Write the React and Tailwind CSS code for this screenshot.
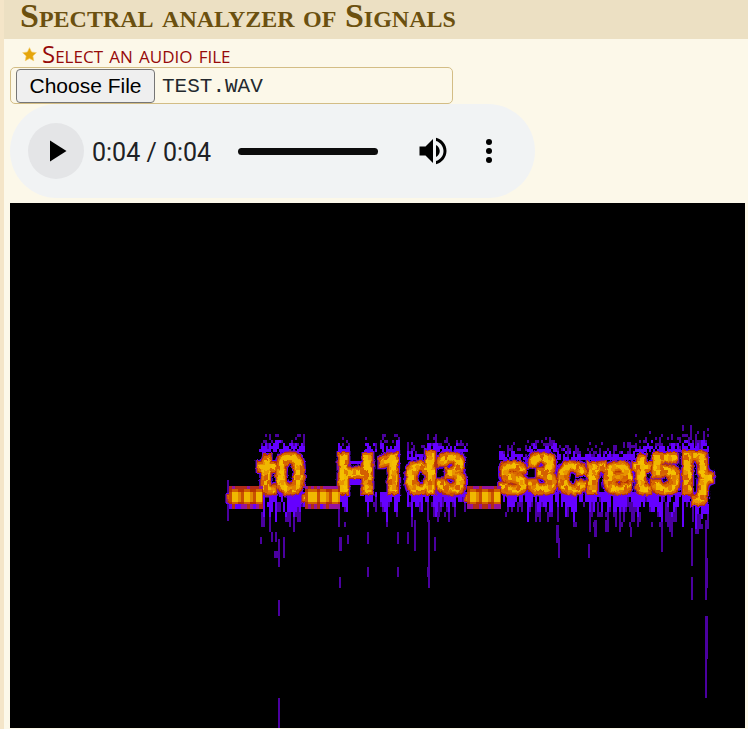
import React from "react";

const GLYPH_X = [229, 258, 275, 304, 336, 376, 405, 436, 467, 498, 527, 557, 585, 603, 633, 650, 680, 692];

// Deterministic noise so that every render gives the same spectrum.
function noise(a, b) {
  const v = Math.sin(a * 127.1 + b * 311.7) * 43758.5453;
  return v - Math.floor(v);
}

// [start, end, first bin, last bin, reach up, reach down]
const BANDS = [
  [259, 305, 452, 492, 18, 42],
  [338, 349, 452, 492, 15, 46],
  [349, 364, 464, 480, 2, 1],
  [365, 376, 452, 492, 15, 40],
  [380, 400, 452, 492, 20, 46],
  [407, 427, 460, 492, 16, 46],
  [427, 438, 452, 492, 20, 54],
  [438, 467, 452, 492, 13, 38],
  [499, 527, 460, 492, 16, 40],
  [527, 557, 452, 492, 15, 48],
  [557, 635, 460, 492, 17, 48],
  [635, 681, 452, 492, 19, 46],
  [682, 693, 452, 492, 24, 54],
  [695, 708, 452, 504, 22, 36],
];

const STREAKS = [
  [278, 539, 2, 28], [274, 551, 5, 7], [260, 537, 2, 7], [283, 537, 2, 21],
  [278, 600, 2, 16], [278, 698, 2, 30],
  [339, 577, 2, 11], [339, 537, 3, 14], [347, 535, 2, 9], [367, 567, 2, 10],
  [367, 532, 2, 12], [397, 567, 2, 10], [397, 532, 2, 12], [407, 532, 2, 12],
  [414, 520, 2, 31], [428, 520, 2, 68], [427, 567, 3, 10], [434, 537, 2, 14],
  [556, 525, 3, 18], [558, 538, 2, 20], [588, 544, 2, 14],
  [594, 520, 3, 17], [605, 520, 4, 12], [630, 527, 2, 10],
  [691, 528, 2, 38], [691, 577, 2, 23], [705, 520, 2, 80],
  [706, 558, 2, 30], [705, 616, 3, 43], [705, 659, 2, 39],
];

function spikes() {
  const out = [];
  BANDS.forEach(([from, to, top, bottom, up, down]) => {
    for (let x = from; x < to; x += 2) {
      const bright = up * (0.1 + 0.45 * noise(x, 1));
      const rise = up * (0.35 + 0.75 * noise(x, 2));
      for (let d = 0; d < rise; d += 3) {
        if (noise(x, d + 20) < (d < bright ? 0.85 : 0.5)) {
          out.push([x, top - d - 3, 2, 3, d < bright ? "#6500ff" : "#4b00a0"]);
        }
      }
      const group = noise(Math.floor(x / 4), 9);
      const lit = down * (0.05 + 0.5 * noise(x, 3) * (0.4 + group));
      const fall = lit + down * 0.8 * group * noise(x, 4);
      for (let d = 0; d < fall; d += 5) {
        if (noise(x, Math.floor(d / 10) + 70) < (d < lit ? 0.88 : 0.75)) {
          out.push([x, bottom + d, 2, 5, d < lit ? "#6500ff" : "#4b00a0"]);
        }
      }
    }
  });
  return out;
}

const HEAT = ["#e08000", "#f0b800", "#f0b800", "#e89400", "#f4c000", "#d46000"];

function Grain() {
  const cells = [];
  for (let y = 0; y < 60; y += 5) {
    for (let x = 0; x < 60; x += 4) {
      const c = HEAT[Math.floor(noise(x + 5, y + 3) * HEAT.length)];
      cells.push(<rect key={x + "-" + y} x={x} y={y} width="4" height="5" fill={c} />);
    }
  }
  return <>{cells}</>;
}

function Floor({ x, width }) {
  const cells = [];
  for (let i = 0; i < width; i += 3) {
    const w = Math.min(3, width - i);
    const n = noise(x + i, 5);
    const core = Math.sin((i / width) * Math.PI * 3) ** 2;
    cells.push(
      <g key={i}>
        <rect x={x + i} y="486" width={w} height="3" fill={n > 0.5 ? "#94149c" : "#b02c18"} />
        <rect x={x + i} y="489" width={w} height="15" fill={core > 0.4 ? "#d06000" : "#b83400"} />
        <rect x={x + i} y="492" width={w} height="10" fill={core > 0.4 ? "#f0b800" : core > 0.15 ? "#e08800" : "#c85000"} />
        <rect x={x + i} y="504" width={w} height="5" fill={n > 0.75 ? "#b02c18" : n > 0.15 ? "#94149c" : "#6500ff"} />
      </g>
    );
  }
  return <g>{cells}</g>;
}

function Spectrogram() {
  return (
    <svg
      className="block h-auto w-full bg-black"
      viewBox="10 203 735 525"
      role="img"
      aria-label="Spectrogram"
      shapeRendering="crispEdges"
    >
      <defs>
        <pattern id="grain" width="60" height="60" patternUnits="userSpaceOnUse">
          <Grain />
        </pattern>
        <filter id="heat" filterUnits="userSpaceOnUse" x="220" y="440" width="510" height="80" colorInterpolationFilters="sRGB">
          <feTurbulence type="fractalNoise" baseFrequency="0.3 0.2" numOctaves="2" seed="4" result="rough" />
          <feMorphology in="SourceAlpha" operator="dilate" radius="3 4" result="far" />
          <feFlood floodColor="#6500ff" />
          <feComposite in2="far" operator="in" result="violet" />
          <feMorphology in="SourceAlpha" operator="dilate" radius="2 3" result="near" />
          <feFlood floodColor="#b83400" />
          <feComposite in2="near" operator="in" result="rust" />
          <feMorphology in="SourceAlpha" operator="dilate" radius="1 2" result="close" />
          <feFlood floodColor="#d86800" />
          <feComposite in2="close" operator="in" result="orange" />
          <feMerge result="all">
            <feMergeNode in="violet" />
            <feMergeNode in="rust" />
            <feMergeNode in="orange" />
            <feMergeNode in="SourceGraphic" />
          </feMerge>
          <feDisplacementMap in="all" in2="rough" scale="4" xChannelSelector="R" yChannelSelector="G" />
        </filter>
      </defs>
      {spikes().map(([x, y, w, h, c], i) => (
        <rect key={i} x={x} y={y} width={w} height={h} fill={c} />
      ))}
      {STREAKS.map(([x, y, w, h], i) => (
        <rect key={i} x={x} y={y} width={w} height={h} fill="#4b00a0" />
      ))}
      <rect x="227" y="480" width="2" height="41" fill="#4b00a0" />
      <text
        className="font-['Liberation_Sans',Arial,sans-serif] text-[54px] font-bold"
        x={GLYPH_X.join(" ")}
        y="492"
        fill="url(#grain)"
        filter="url(#heat)"
      >
        _t0_H<tspan className="font-[Roboto,sans-serif]">1</tspan>d3_s3cret5l{"}"}
      </text>
      <Floor x={229} width={34} />
      <Floor x={305} width={35} />
      <Floor x={467} width={34} />
    </svg>
  );
}

export default function App() {
  return (
    <main className="border-l-4 border-[#f4e5c8] bg-[#fcf8e9] pb-px">
      <header className="flex h-[39px] items-start bg-[#ece0c3] pl-4">
        <h1 className="font-['Liberation_Serif',serif] text-[34px] leading-8 font-bold whitespace-nowrap text-[#6b500f] [font-variant:small-caps]">
          Spectral analyzer of Signals
        </h1>
      </header>
      <div className="pr-[3px] pl-[6px]">
        <div className="flex h-7 items-center gap-[5px] pt-0.5 pl-3">
          <svg className="size-[15px]" viewBox="0 0 24 24" fill="#e5a50a" stroke="#f2cb69" strokeWidth="1" aria-hidden="true">
            <path d="M12 1l3.4 7 7.6 1-5.600 5.300 1.400 7.700-6.800-3.700-6.800 3.700 1.400-7.700L1 9l7.600-1z" />
          </svg>
          <label htmlFor="audio-file" className="font-['Open_Sans',sans-serif] text-[24px] leading-5 whitespace-nowrap text-[#960a0a] [font-variant:small-caps]">
            Select an audio file
          </label>
        </div>
        <div className="flex h-[37px] w-full max-w-[443px] items-center gap-[7px] rounded-[5px] border border-[#d3bd85] pl-[5px]">
          <button
            id="audio-file"
            type="button"
            className="h-[34px] w-[139px] rounded-[4px] border border-[#767676] bg-[#efefef] font-['Liberation_Sans',Arial,sans-serif] text-[21px] leading-6 text-black"
          >
            Choose File
          </button>
          <output className="pt-0.5 font-['Liberation_Mono',monospace] text-[21px] leading-6 text-[#24292e]">TEST.WAV</output>
        </div>
        <section aria-label="Audio player" className="flex h-[94px] w-full max-w-[525px] items-center rounded-full bg-[#f1f3f4] px-[18px]">
          <button type="button" aria-label="Play" className="flex size-14 items-center justify-center rounded-full bg-[#e4e5e7]">
            <svg className="size-9" viewBox="0 0 24 24" aria-hidden="true">
              <path d="M8 5v14l11-7z" />
            </svg>
          </button>
          <span className="mt-1 ml-2 w-[146px] font-[Roboto,sans-serif] text-[25px] leading-8 whitespace-nowrap text-[#202124]">0:04 / 0:04</span>
          <input
            type="range"
            aria-label="Playback position"
            min="0"
            max="4"
            defaultValue="4"
            className="h-[7px] min-w-0 flex-1 appearance-none rounded-full bg-[#0c0c0c] [&::-webkit-slider-thumb]:size-0 [&::-webkit-slider-thumb]:appearance-none"
          />
          <button type="button" aria-label="Mute" className="ml-[27px] flex size-14 items-center justify-center">
            <svg className="size-9" viewBox="0 0 24 24" aria-hidden="true">
              <path d="M3 9v6h4l5 5V4L7 9H3zm13.500 3c0-1.770-1.020-3.290-2.500-4.030v8.050c1.480-.730 2.500-2.250 2.500-4.020zM14 3.230v2.060c2.890.860 5 3.540 5 6.710s-2.110 5.850-5 6.710v2.060c4.010-.910 7-4.490 7-8.770s-2.990-7.860-7-8.770z" />
            </svg>
          </button>
          <button type="button" aria-label="More options" className="flex size-14 items-center justify-center">
            <svg className="size-9" viewBox="0 0 24 24" aria-hidden="true">
              <circle cx="12" cy="6" r="2" />
              <circle cx="12" cy="12" r="2" />
              <circle cx="12" cy="18" r="2" />
            </svg>
          </button>
        </section>
        <div className="pt-[5px]">
          <Spectrogram />
        </div>
      </div>
    </main>
  );
}
